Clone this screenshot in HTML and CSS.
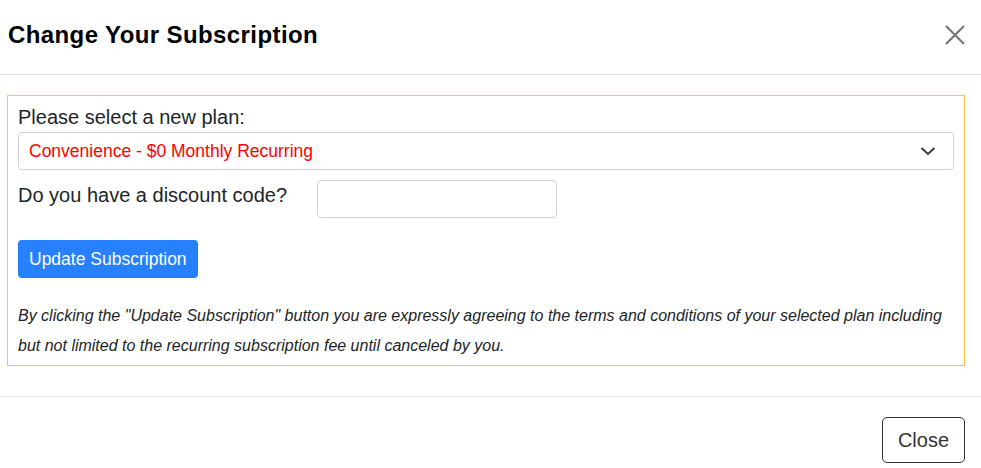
FILE: index.html
```html
<!DOCTYPE html>
<html>
<head>
<meta charset="utf-8">
<link rel="stylesheet" href="styles.css">
</head>
<body>
<div class="modal">
  <div class="modal-header">
    <h5 class="modal-title">Change Your Subscription</h5>
    <button class="btn-close" aria-label="Close">
      <svg width="20" height="20" viewBox="0 0 20 20"><path d="M1 1L19 19M19 1L1 19" stroke="#777" stroke-width="2.2" fill="none"/></svg>
    </button>
  </div>
  <div class="modal-body">
    <div class="plan-box">
      <div class="label">Please select a new plan:</div>
      <div class="select">
        <span class="select-text">Convenience - $0 Monthly Recurring</span>
        <svg class="chevron" width="16" height="10" viewBox="0 0 16 10"><path d="M1.5 2L8 8L14.5 2" stroke="#343a40" stroke-width="2" fill="none"/></svg>
      </div>
      <div class="discount-row">
        <div class="label discount-label">Do you have a discount code?</div>
        <div class="input"></div>
      </div>
      <button class="btn-primary">Update Subscription</button>
      <p class="terms">By clicking the "Update Subscription" button you are expressly agreeing to the terms and conditions of your selected plan including but not limited to the recurring subscription fee until canceled by you.</p>
    </div>
  </div>
  <div class="modal-footer">
    <button class="btn-close-footer">Close</button>
  </div>
</div>
</body>
</html>
```
FILE: styles.css
```css
* { box-sizing: border-box; }
html, body { margin: 0; padding: 0; background: #fff; }
body { font-family: "Liberation Sans", Arial, sans-serif; color: #212529; }
.modal { width: 981px; }
.modal-header {
  display: flex;
  justify-content: space-between;
  align-items: flex-start;
  height: 75px;
  border-bottom: 1px solid #dee2e6;
  padding: 20px 16px 0 8px;
}
.modal-title {
  margin: 0;
  font-size: 24px;
  line-height: 29px;
  letter-spacing: 0.4px;
  font-weight: bold;
  color: #000;
}
.btn-close {
  border: 0; background: none; padding: 0; margin-top: 5px; margin-right: 0;
  width: 20px; height: 20px; display: block;
}
.btn-close svg { display: block; }
.modal-body { padding: 20px 16px 30px 7px; }
.plan-box {
  border: 1px solid #f0c674;
  border-right-color: #f6c244;
  padding: 9px 10px 4px 10px;
}
.label { font-size: 20px; line-height: 24px; color: #212529; }
.plan-box > .label { margin-bottom: 3px; }
.select {
  height: 38px;
  border: 1px solid #ced4da;
  border-radius: 4px;
  display: flex;
  align-items: center;
  justify-content: space-between;
  padding: 0 17px 0 10px;
}
.select-text { color: #ff0000; font-size: 17.5px; }
.chevron { display: block; }
.discount-row { display: flex; align-items: flex-start; margin-top: 10px; }
.discount-label { width: 299px; padding-top: 3px; }
.input {
  width: 240px; height: 38px;
  border: 1px solid #ced4da; border-radius: 4px;
}
.btn-primary {
  display: block;
  margin-top: 22px;
  height: 38px;
  padding: 0 11px;
  background: #2680ff;
  color: #fff;
  border: 0;
  border-radius: 4px;
  font-family: "Liberation Sans", Arial, sans-serif;
  font-size: 17.5px;
}
.terms {
  margin: 23px 0 0 0;
  font-style: italic;
  font-size: 16px;
  line-height: 30px;
  color: #212529;
}
.modal-footer {
  border-top: 1px solid #dee2e6;
  display: flex;
  justify-content: flex-end;
  padding: 20px 16px 0 0;
}
.btn-close-footer {
  width: 83px; height: 46px;
  background: #fff;
  border: 1px solid #333;
  border-radius: 5px;
  font-family: "Liberation Sans", Arial, sans-serif;
  font-size: 20px;
  color: #333;
}
```
